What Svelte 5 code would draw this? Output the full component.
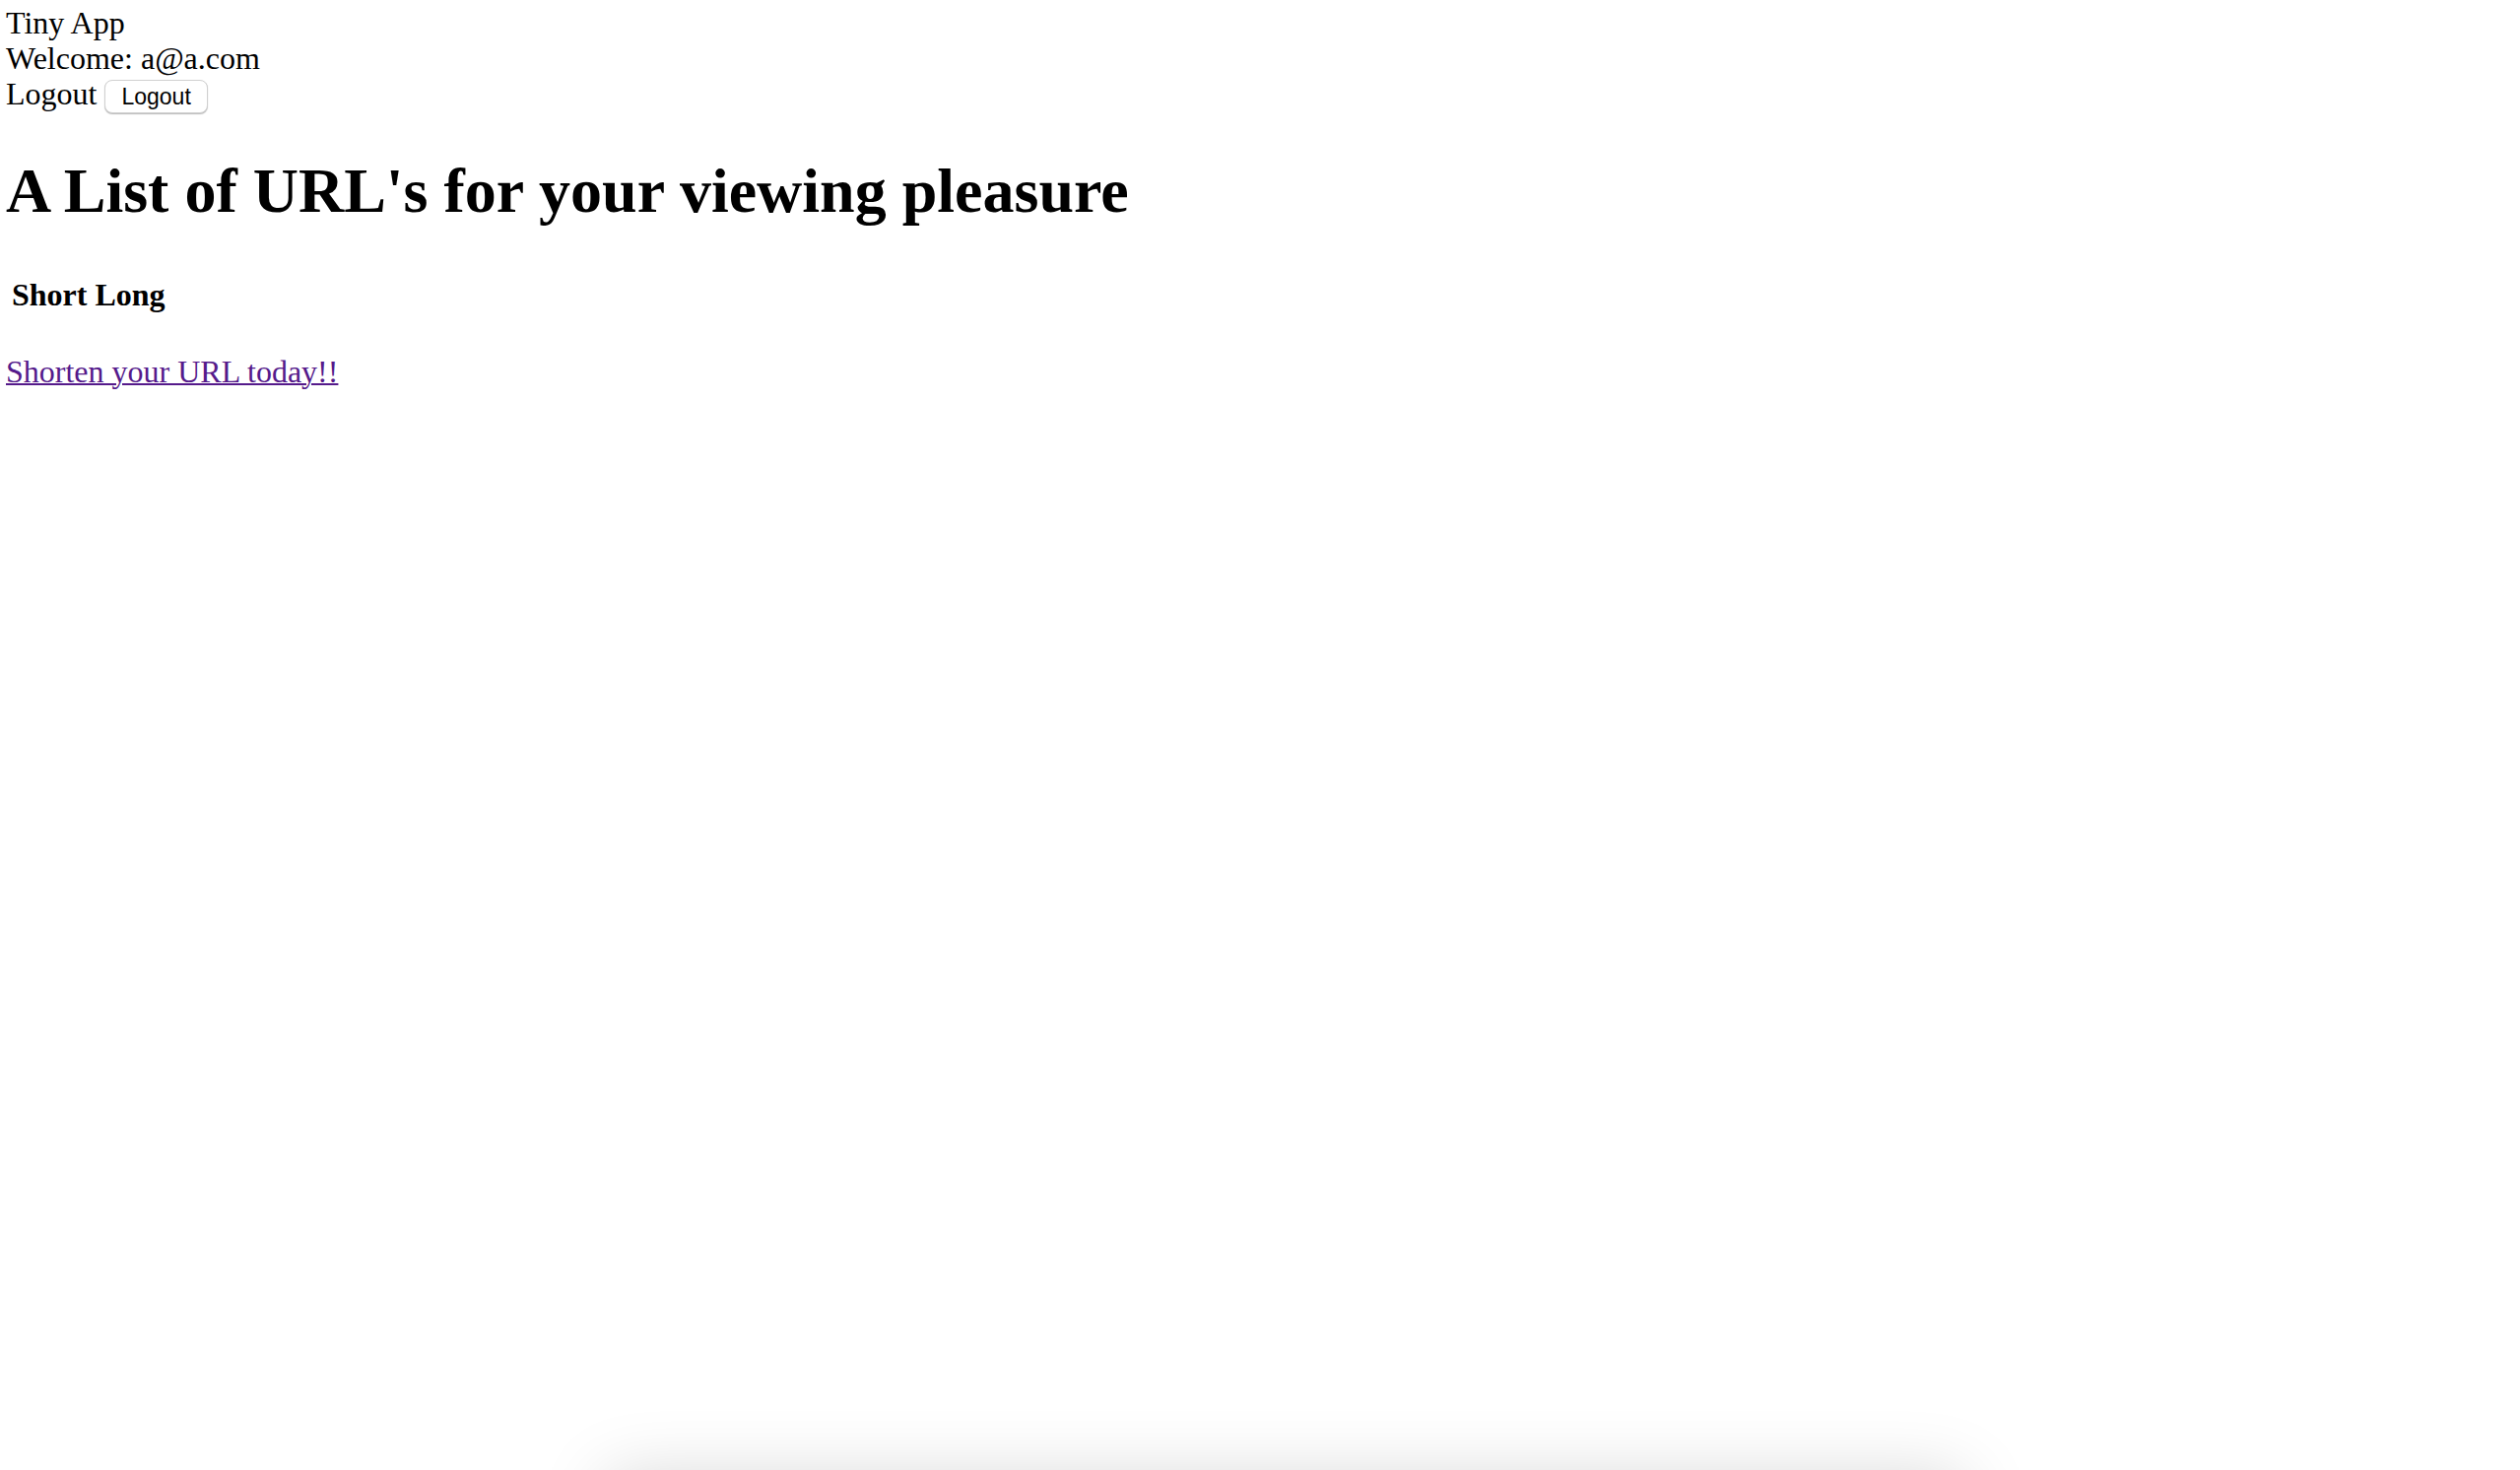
<script>
  const email = 'a@a.com';
</script>

<div class="page">
  <header>
    <div>Tiny App</div>
    <div>Welcome: {email}</div>
    <form onsubmit={(e) => e.preventDefault()}>
      <label for="logout">Logout</label>
      <button id="logout" type="submit">Logout</button>
    </form>
  </header>
  <main>
    <h1>A List of URL's for your viewing pleasure</h1>
    <table>
      <thead>
        <tr><th scope="col">Short</th><th scope="col">Long</th></tr>
      </thead>
    </table>
    <a href="#new">Shorten your URL today!!</a>
  </main>
  <div class="shade" aria-hidden="true"></div>
</div>

<style>
  :global(body) {
    background: #fff;
  }
  .page {
    display: flex;
    flex-direction: column;
    min-height: 100vh;
    box-sizing: border-box;
    overflow: hidden;
    padding: 5px 6px 0;
    font-family: "Liberation Serif", "Times New Roman", serif;
    font-size: 32px;
    line-height: 36px;
    color: #000;
  }
  form {
    display: flex;
    align-items: baseline;
    gap: 8px;
    height: 36px;
  }
  button {
    height: 34px;
    padding: 0 16px;
    border: 1px solid #d0d0d0;
    border-radius: 8px;
    background: #fff;
    box-shadow: 0 1px 1px #bbb;
    font: 23px/30px "Liberation Sans", Arial, sans-serif;
    color: #000;
  }
  h1 {
    margin: 44px 0;
    font-size: 64px;
    line-height: 74px;
  }
  table {
    border-spacing: 4px;
    margin-bottom: 36px;
  }
  th {
    padding: 2px;
  }
  a {
    color: #551a8b;
    text-decoration-thickness: 2px;
  }
  /* soft shadow rising from below the bottom edge */
  .shade {
    width: 54%;
    height: 100px;
    margin: auto 22% -108px auto;
    box-shadow: 0 0 70px #0000002b;
  }
</style>
